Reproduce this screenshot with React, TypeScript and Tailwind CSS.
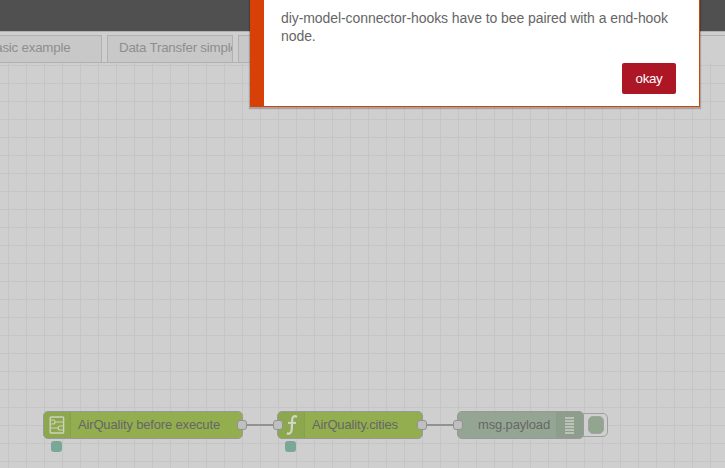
import type { ReactNode } from 'react';

function Tab({ children, className }: { children?: ReactNode; className: string }) {
  return (
    <div
      className={`box-border h-[28px] shrink-0 overflow-hidden border border-[#b1b1b1] bg-[#c8c8c8] whitespace-nowrap text-[13.33px] leading-[24px] tracking-[-0.22px] text-[#8e8e8e] ${className}`}
    >
      {children}
    </div>
  );
}

function TabGap() {
  return <span className="h-full w-[5px] shrink-0 border-b border-[#b1b1b1]" />;
}

function Port({ className }: { className: string }) {
  return (
    <span
      className={`absolute top-[8px] size-[10px] rounded-[3px] border border-[#929292] bg-[#bfbfbf] ${className}`}
    />
  );
}

function Status({ className }: { className: string }) {
  return <span className={`absolute top-[441px] size-[11px] rounded-[3px] bg-[#7aa896] ${className}`} />;
}

function FlowNode({ className, children }: { className: string; children: ReactNode }) {
  return (
    <div
      className={`absolute top-[411px] flex h-[28px] items-center rounded-[5px] border border-[#999] text-[13px] leading-[26px] tracking-[-0.16px] whitespace-nowrap text-[#666] ${className}`}
    >
      {children}
    </div>
  );
}

function HookIcon() {
  return (
    <svg width="16" height="18" viewBox="0 0 16 18" fill="none" stroke="#cbd3b8" strokeWidth="1.2">
      <rect x="1.2" y="1" width="13.4" height="16" rx="0.8" strokeWidth="1.4" />
      <path d="M1.5 4H4.2C6.6 4 6.6 8 4.2 8H1.5M6 6H14.5" />
      <path d="M14.5 10H11.2C8.4 10 8.4 14 11.2 14H14.5M1.5 12H9" />
    </svg>
  );
}

function FunctionIcon() {
  return (
    <svg width="14" height="22" viewBox="0 0 14 22" fill="none" stroke="#d2d6c8" strokeWidth="2.2">
      <path d="M12.9 3C10.3 1.3 8.4 2.4 8.2 5.5L7.7 15.5C7.5 19 5.6 20.6 2.8 19.2" />
      <path d="M4 8.9H12" strokeWidth="2" />
    </svg>
  );
}

function DebugIcon() {
  return (
    <svg width="10" height="17" viewBox="0 0 10 17" stroke="#c9cec8" strokeWidth="1.3">
      <path d="M0 1H9M0 4H9M0 7H9M0 10H9M0 13H9M0 16H9" />
    </svg>
  );
}

function Wire({ className }: { className: string }) {
  return <span className={`absolute top-[423.5px] h-[2.6px] bg-[#929292] ${className}`} />;
}

export default function App() {
  return (
    <div className="relative flex h-[468px] w-[725px] flex-col overflow-hidden bg-[#cfcfcf] font-['Liberation_Sans',Arial,sans-serif]">
      <header className="h-[31px] shrink-0 bg-[#505050]" />
      <nav className="flex h-[32px] shrink-0 items-end overflow-hidden border-t border-[#b1b1b1]">
        <Tab className="w-[102px] border-l-0"><span className="-ml-[12px]">basic example</span></Tab>
        <TabGap />
        <Tab className="w-[126px] pl-[11px]">Data Transfer simple</Tab>
        <TabGap />
        <Tab className="w-[126px]" />
        <TabGap />
        <div className="h-[28px] grow border-t border-l border-[#b1b1b1]" />
      </nav>
      <main className="grow bg-[linear-gradient(to_right,#c5c5c5_1px,transparent_1px),linear-gradient(to_bottom,#c5c5c5_1px,transparent_1px)] bg-size-[18px_18px] bg-position-[8px_2px]">
        <Wire className="left-[243px] w-[35px]" />
        <Wire className="left-[422px] w-[36px]" />

        <FlowNode className="left-[43px] w-[200px] bg-[#93ae4f]">
          <span className="flex h-full w-[27px] items-center justify-center rounded-l-[4px] border-r border-[#87a04b] bg-[#8da74e]"><HookIcon /></span>
          <span className="pl-[7px]">AirQuality before execute</span>
          <Port className="-right-[5px]" />
        </FlowNode>
        <FlowNode className="left-[277px] w-[146px] bg-[#93ae4f]">
          <span className="flex h-full w-[27px] items-center justify-center rounded-l-[4px] border-r border-[#87a04b] bg-[#8da74e]"><FunctionIcon /></span>
          <span className="pl-[7px]">AirQuality.cities</span>
          <Port className="-left-[5px]" />
          <Port className="-right-[5px]" />
        </FlowNode>

        <div className="absolute top-[413px] left-[578px] flex h-[24px] w-[30px] items-center justify-end rounded-[5px] border border-[#a0a0a0] bg-[#cfcfcf] pr-[3px]">
          <span className="h-[18px] w-[16px] rounded-[5px] border border-[#a0a4a0] bg-[#91a58f]" />
        </div>
        <FlowNode className="left-[457px] w-[127px] justify-end bg-[#94a693]">
          <span className="pr-[6px]">msg.payload</span>
          <span className="flex h-full w-[27px] items-center justify-center rounded-r-[4px] border-l border-[#8b9c8a] bg-[#8d9f8c]"><DebugIcon /></span>
          <Port className="-left-[5px]" />
        </FlowNode>

        <Status className="left-[50.5px]" />
        <Status className="left-[284.5px]" />
      </main>

      <section className="absolute top-0 left-[250px] flex h-[107px] w-[450px] flex-col border-r border-b border-l-[14px] border-[#d74108] bg-white pt-[9px] pr-[23px] pl-[17px] text-[14px] leading-[18px] tracking-[-0.075px] text-[#666] shadow-[0_1px_1px_1px_rgba(0,0,0,0.2)]">
        <p className="w-[400px]">diy-model-connector-hooks have to bee paired with a end-hook node.</p>
        <button className="mt-[18px] h-[31px] w-[54px] self-end rounded-[2px] bg-[#ad1625] text-[13.33px] tracking-[-0.3px] text-white">okay</button>
      </section>
    </div>
  );
}
